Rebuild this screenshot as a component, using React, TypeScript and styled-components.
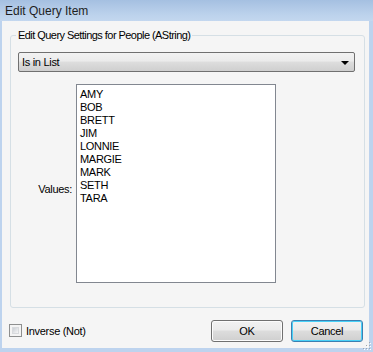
import React from "react";
import styled, { createGlobalStyle } from "styled-components";

const GlobalStyle = createGlobalStyle`
  html, body {
    margin: 0;
    padding: 0;
    background: #bfd4ee;
  }
`;

const Window = styled.div`
  width: 373px;
  height: 352px;
  display: flex;
  flex-direction: column;
  background: #bdd3ee;
  font-family: "Liberation Sans", Arial, sans-serif;
  font-size: 11px;
  letter-spacing: -0.3px;
  color: #000;
  box-sizing: border-box;
  overflow: hidden;
`;

const TitleBar = styled.div`
  height: 21px;
  flex: none;
  display: flex;
  align-items: center;
  padding-left: 5px;
  font-size: 12px;
  letter-spacing: 0;
  color: #1e1e1e;
  background: linear-gradient(#a5c0e1, #bcd2ec 70%, #c3d7ef);
`;

const Client = styled.div`
  flex: 1;
  margin: 0 4px 4px 2px;
  background: #f5f5f5;
  display: flex;
  flex-direction: column;
  padding: 7px 4px 0 8px;
  position: relative;
`;

const Group = styled.fieldset`
  margin: 0;
  height: 280px;
  box-sizing: border-box;
  border: 1px solid #d5dfe5;
  border-radius: 3px;
  padding: 10px 9px 0 7px;
  display: flex;
  flex-direction: column;
  gap: 12px;
`;

const Legend = styled.legend`
  margin-left: -2px;
  padding: 0 2px;
  font-size: 11px;
  line-height: 14px;
  letter-spacing: -0.55px;
`;

const Combo = styled.div`
  height: 20px;
  box-sizing: border-box;
  border: 1px solid #707070;
  border-radius: 2px;
  background: linear-gradient(#f2f2f2 0%, #ebebeb 45%, #dddddd 50%, #cfcfcf 100%);
  display: flex;
  align-items: center;
  justify-content: space-between;
  padding: 0 5px 0 3px;
`;

const Arrow = styled.span`
  width: 0;
  height: 0;
  border-left: 4px solid transparent;
  border-right: 4px solid transparent;
  border-top: 4px solid #000;
  margin-top: 1px;
`;

const ListRow = styled.div`
  display: flex;
  gap: 4px;
`;

const FieldLabel = styled.div`
  width: 54px;
  text-align: right;
  padding-top: 99px;
`;

const ListBox = styled.div`
  width: 200px;
  height: 199px;
  box-sizing: border-box;
  border: 1px solid #828790;
  background: #fff;
  padding: 3px 3px;
`;

const ListItem = styled.div`
  height: 13px;
  line-height: 13px;
`;

const Footer = styled.div`
  flex: 1;
  display: flex;
  align-items: center;
  justify-content: space-between;
  padding: 5px 2px 0 0;
  margin-left: -1px;
`;

const CheckLabel = styled.label`
  display: flex;
  align-items: center;
  gap: 4px;
`;

const CheckBox = styled.span`
  width: 13px;
  height: 13px;
  box-sizing: border-box;
  border: 1px solid #8e8f8f;
  background: #f4f4f4;
  padding: 2px;
  display: flex;
  & > span {
    flex: 1;
    background: linear-gradient(135deg, #cbcfd5, #f6f6f6);
    border: 1px solid #d8dadd;
  }
`;

const Buttons = styled.div`
  display: flex;
  gap: 8px;
  margin-top: 1px;
`;

const Button = styled.button<{ $focused?: boolean }>`
  width: 72px;
  height: 22px;
  box-sizing: border-box;
  font-family: inherit;
  font-size: 11px;
  letter-spacing: inherit;
  color: #000;
  padding: 0;
  border: 1px solid ${(p) => (p.$focused ? "#3c7fb1" : "#707070")};
  border-radius: 3px;
  background: linear-gradient(#f2f2f2 0%, #ebebeb 45%, #dddddd 50%, #cfcfcf 100%);
  box-shadow: ${(p) => (p.$focused ? "inset 0 0 0 1px #48d1f8" : "inset 0 0 0 1px #fcfcfc")};
`;

const Grip = styled.svg`
  position: absolute;
  right: -3px;
  bottom: -3px;
`;

const names = ["AMY", "BOB", "BRETT", "JIM", "LONNIE", "MARGIE", "MARK", "SETH", "TARA"];

const ResizeGrip = () => (
  <Grip width="9" height="9" viewBox="0 0 9 9">
    {[
      [7, 1],
      [4, 4],
      [7, 4],
      [1, 7],
      [4, 7],
      [7, 7],
    ].map(([x, y]) => (
      <g key={`${x}-${y}`}>
        <rect x={x} y={y} width="1" height="1" fill="#fff" />
        <rect x={x - 1} y={y - 1} width="1" height="1" fill="#9fa6ae" />
      </g>
    ))}
  </Grip>
);

export default function App() {
  return (
    <>
      <GlobalStyle />
      <Window>
        <TitleBar>Edit Query Item</TitleBar>
        <Client>
          <Group>
            <Legend>Edit Query Settings for People (AString)</Legend>
            <Combo>
              <span>Is in List</span>
              <Arrow />
            </Combo>
            <ListRow>
              <FieldLabel>Values:</FieldLabel>
              <ListBox>
                {names.map((n) => (
                  <ListItem key={n}>{n}</ListItem>
                ))}
              </ListBox>
            </ListRow>
          </Group>
          <Footer>
            <CheckLabel>
              <CheckBox>
                <span />
              </CheckBox>
              Inverse (Not)
            </CheckLabel>
            <Buttons>
              <Button>OK</Button>
              <Button $focused>Cancel</Button>
            </Buttons>
          </Footer>
          <ResizeGrip />
        </Client>
      </Window>
    </>
  );
}
